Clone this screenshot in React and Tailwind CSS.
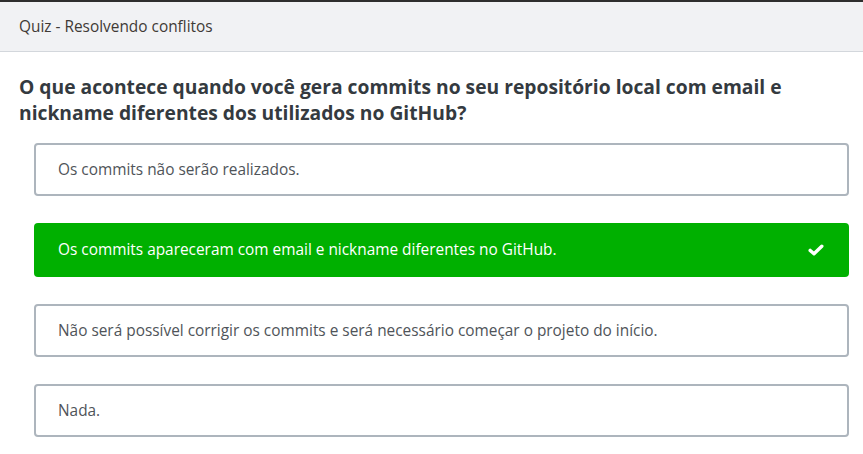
const options = [
  { text: "Os commits não serão realizados.", correct: false },
  {
    text: "Os commits apareceram com email e nickname diferentes no GitHub.",
    correct: true,
  },
  {
    text: "Não será possível corrigir os commits e será necessário começar o projeto do início.",
    correct: false,
  },
  { text: "Nada.", correct: false },
];

function CheckIcon() {
  return (
    <svg width="16" height="12" viewBox="0 0 16 12" fill="none">
      <path
        d="M2.2 6.4 L6 9.8 L13.8 2.2"
        stroke="white"
        strokeWidth="3.4"
        strokeLinecap="round"
        strokeLinejoin="round"
      />
    </svg>
  );
}

export default function App() {
  return (
    <div className="min-h-screen bg-white font-['Open_Sans',sans-serif]">
      {/* Header */}
      <div className="border-t-2 border-[#2e2e2e]">
        <div className="flex h-[50px] items-center border-b border-[#d3d7dc] bg-[#f1f2f4] px-[19px] text-[15.4px] text-[#3f3a36]">
          Quiz - Resolvendo conflitos
        </div>
      </div>

      <div className="pl-[19px] pr-[14px] pt-[22px]">
        <h1 className="text-[19.25px] font-bold leading-[26px] text-[#343a40]">
          O que acontece quando você gera commits no seu repositório local com
          email e nickname diferentes dos utilizados no GitHub?
        </h1>

        <div className="ml-[15px] mt-[17px] flex flex-col gap-[27px]">
          {options.map((opt) =>
            opt.correct ? (
              <div
                key={opt.text}
                className="flex h-[54px] items-center justify-between rounded-[4px] bg-[#00b000] pl-[24px] pr-[25px] text-[15.4px] text-white"
              >
                <span>{opt.text}</span>
                <CheckIcon />
              </div>
            ) : (
              <div
                key={opt.text}
                className="flex h-[53px] items-center rounded-[4px] border-2 border-[#adb5bd] pl-[22px] text-[15.4px] text-[#4f5459]"
              >
                {opt.text}
              </div>
            )
          )}
        </div>
      </div>
    </div>
  );
}
